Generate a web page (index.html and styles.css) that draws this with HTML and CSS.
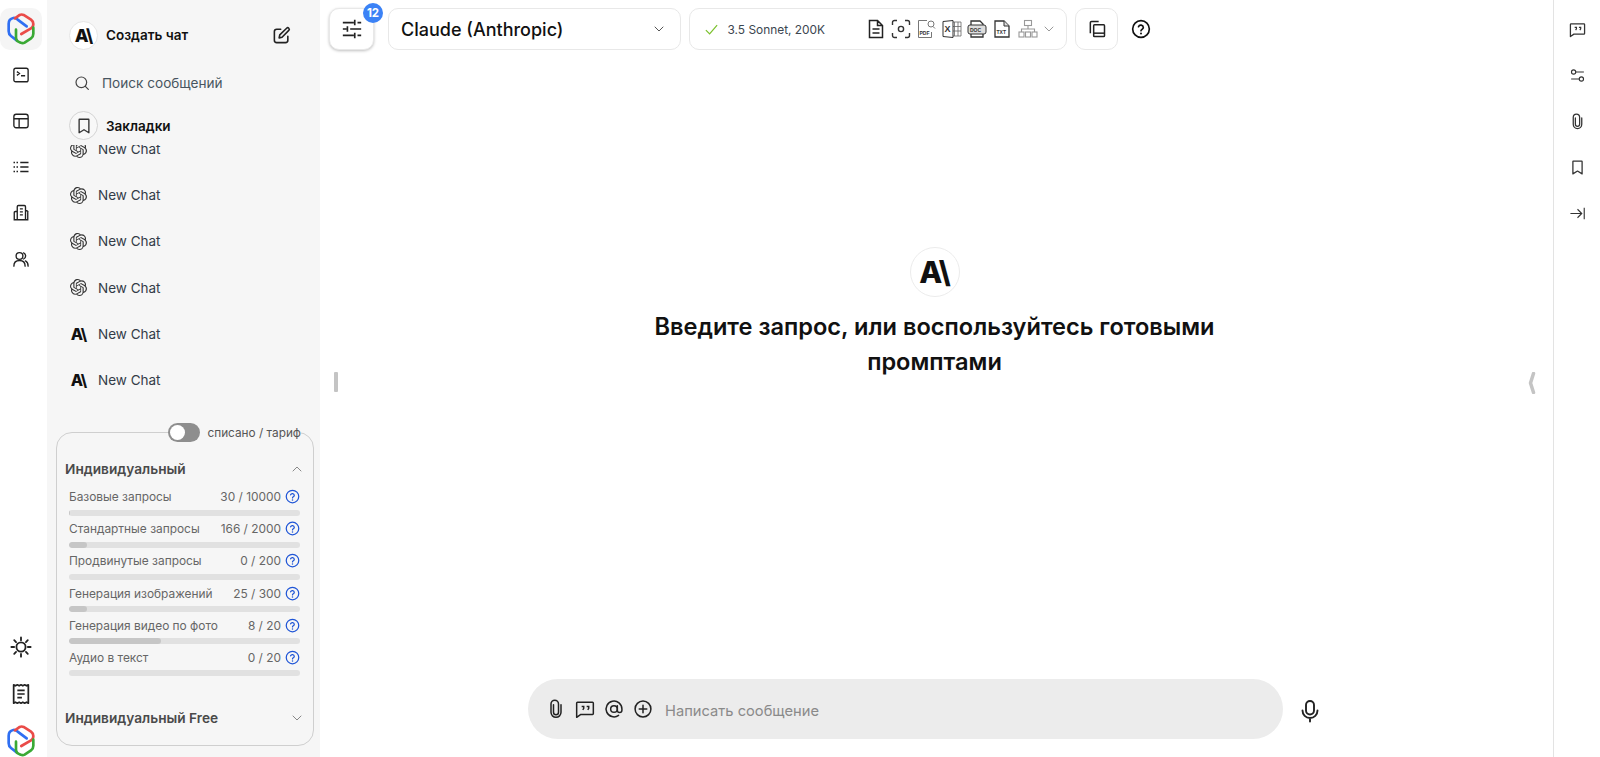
FILE: index.html
```html
<!DOCTYPE html>
<html lang="ru">
<head>
    <meta charset="UTF-8">
    <meta name="viewport" content="width=device-width, initial-scale=1.0">
    <title>Чат</title>
    <link rel="stylesheet" href="styles.css">
</head>
<body>

    <svg class="defs" width="0" height="0">
        <symbol id="logo" viewBox="20 42 82 96">
            <path d="M48 124 31 111Q24 106 24 97V74Q24 60 38 57 44 56 50 61L78 82" fill="none" stroke="#2f6ff2" stroke-width="8" stroke-linecap="round"/>
            <path d="M43 58 57 48Q63 45 69 48L91 62Q98 67 98 75 98 84 91 88L62 105" fill="none" stroke="#ea4b48" stroke-width="8" stroke-linecap="round"/>
            <path d="M46 92V116Q46 124 53 128L60 131Q66 134 72 131L91 118Q98 113 98 104V86" fill="none" stroke="#3aa935" stroke-width="8" stroke-linecap="round"/>
        </symbol>
        <symbol id="openai" viewBox="0 0 24 24">
            <path fill="#333" d="M22.2819 9.8211a5.9847 5.9847 0 0 0-.5157-4.9108 6.0462 6.0462 0 0 0-6.5098-2.9A6.0651 6.0651 0 0 0 4.9807 4.1818a5.9847 5.9847 0 0 0-3.9977 2.9 6.0462 6.0462 0 0 0 .7427 7.0966 5.98 5.98 0 0 0 .511 4.9107 6.051 6.051 0 0 0 6.5146 2.9001A5.9847 5.9847 0 0 0 13.2599 24a6.0557 6.0557 0 0 0 5.7718-4.2058 5.9894 5.9894 0 0 0 3.9977-2.9001 6.0557 6.0557 0 0 0-.7475-7.0729zm-9.022 12.6081a4.4755 4.4755 0 0 1-2.8764-1.0408l.1419-.0804 4.7783-2.7582a.7948.7948 0 0 0 .3927-.6813v-6.7369l2.02 1.1686a.071.071 0 0 1 .038.052v5.5826a4.504 4.504 0 0 1-4.4945 4.4944zm-9.6607-4.1254a4.4708 4.4708 0 0 1-.5346-3.0137l.142.0852 4.783 2.7582a.7712.7712 0 0 0 .7806 0l5.8428-3.3685v2.3324a.0804.0804 0 0 1-.0332.0615L9.74 19.9502a4.4992 4.4992 0 0 1-6.1408-1.6464zM2.3408 7.8956a4.485 4.485 0 0 1 2.3655-1.9728V11.6a.7664.7664 0 0 0 .3879.6765l5.8144 3.3543-2.0201 1.1685a.0757.0757 0 0 1-.071 0l-4.8303-2.7865A4.504 4.504 0 0 1 2.3408 7.872zm16.5963 3.8558L13.1038 8.364 15.1192 7.2a.0757.0757 0 0 1 .071 0l4.8303 2.7913a4.4944 4.4944 0 0 1-.6765 8.1042v-5.6772a.79.79 0 0 0-.407-.667zm2.0107-3.0231l-.142-.0852-4.7735-2.7818a.7759.7759 0 0 0-.7854 0L9.409 9.2297V6.8974a.0662.0662 0 0 1 .0284-.0615l4.8303-2.7866a4.4992 4.4992 0 0 1 6.6802 4.66zM8.3065 12.863l-2.02-1.1638a.0804.0804 0 0 1-.038-.0567V6.0742a4.4992 4.4992 0 0 1 7.3757-3.4537l-.142.0805L8.704 5.459a.7948.7948 0 0 0-.3927.6813zm1.0976-2.3654l2.602-1.4998 2.6069 1.4998v2.9994l-2.5974 1.4997-2.6067-1.4997Z"/>
        </symbol>
        <symbol id="help" viewBox="0 0 24 24">
            <circle cx="12" cy="12" r="10" fill="none" stroke="currentColor" stroke-width="2"/>
            <path d="M9 9.3a3 3 0 0 1 5.8.9c0 2-2.8 2.4-2.8 4" fill="none" stroke="currentColor" stroke-width="2" stroke-linecap="round"/>
            <circle cx="12" cy="17.5" r="1.2" fill="currentColor"/>
        </symbol>
        <symbol id="quote" viewBox="0 0 24 24">
            <path d="M3 4h18a1 1 0 0 1 1 1v12.500a1 1 0 0 1-1 1H7L2 22V5a1 1 0 0 1 1-1z" fill="none" stroke="currentColor" stroke-width="1.8" stroke-linejoin="round"/>
            <path d="M8 9h2.500v2.200L9.300 13M14 9h2.500v2.200L15.300 13" fill="none" stroke="currentColor" stroke-width="1.700"/>
        </symbol>
        <symbol id="clip" viewBox="0 0 24 24">
            <path d="M9 7v9a3 3 0 0 0 6 0V6a4.500 4.500 0 0 0-9 0v10a6 6 0 0 0 12 0V7" fill="none" stroke="currentColor" stroke-width="1.800" stroke-linecap="round"/>
        </symbol>
        <symbol id="bookmark" viewBox="0 0 24 24">
            <path d="M6 3h12a.5.5 0 0 1 .5.5V21L12 17l-6.500 4V3.500A.5.5 0 0 1 6 3z" fill="none" stroke="currentColor" stroke-width="1.800" stroke-linejoin="round"/>
        </symbol>
        <symbol id="chevron" viewBox="0 0 24 24">
            <path d="M4 8l8 8 8-8" fill="none" stroke="currentColor" stroke-width="2" stroke-linecap="round" stroke-linejoin="round"/>
        </symbol>
    </svg>

    <div class="app">

        <nav class="rail">
            <div class="rail-logo"><svg class="logo-icon"><use href="#logo"/></svg></div>
            <div class="rail-items">
                <svg class="rail-icon" viewBox="0 0 24 24"><rect x="2.500" y="3" width="19" height="18" rx="2.500" fill="none" stroke="#222" stroke-width="1.800"/><path d="M6.500 7.500l3.500 2.500-3.500 2.500M12 13h5.500" fill="none" stroke="#222" stroke-width="1.700"/></svg>
                <svg class="rail-icon" viewBox="0 0 24 24"><rect x="2.500" y="3" width="19" height="18" rx="3" fill="none" stroke="#222" stroke-width="1.800"/><path d="M2.500 9h19M9.500 9v12" fill="none" stroke="#222" stroke-width="1.800"/></svg>
                <svg class="rail-icon" viewBox="0 0 24 24"><path d="M2 6h2M6 6h2M11 6h11M2 12h2M6 12h2M11 12h11M2 18h2M6 18h2M11 18h11" fill="none" stroke="#222" stroke-width="2"/></svg>
                <svg class="rail-icon" viewBox="0 0 24 24"><path d="M7 21V3.500A1.500 1.500 0 0 1 8.500 2h8A1.500 1.500 0 0 1 18 3.500V21M7 10H4.500A1.500 1.500 0 0 0 3 11.500V21h18v-9.500A1.500 1.500 0 0 0 18 10M10.500 6.500h4M10.500 10.500h4M10.500 14.500h4" fill="none" stroke="#222" stroke-width="1.800"/></svg>
                <svg class="rail-icon" viewBox="0 0 24 24"><circle cx="10" cy="8" r="4.500" fill="none" stroke="#222" stroke-width="1.800"/><path d="M2.500 21.500c0-4.500 3-7.500 7.500-7.500s7.500 3 7.500 7.500M15.500 3.800a4.500 4.500 0 0 1 0 8.200M18 14.500c2 1 3.500 3.500 3.500 7" fill="none" stroke="#222" stroke-width="1.800" stroke-linecap="round"/></svg>
            </div>
            <div class="rail-bottom">
                <svg class="sun-icon" viewBox="0 0 24 24"><circle cx="12" cy="12" r="5" fill="none" stroke="#222" stroke-width="2"/><path d="M12 1.500v3M12 19.500v3M1.500 12h3M19.500 12h3M4.600 4.600l2 2M17.400 17.400l2 2M4.600 19.400l2-2M17.400 6.600l2-2" fill="none" stroke="#222" stroke-width="2" stroke-linecap="round"/></svg>
                <svg class="sun-icon" viewBox="0 0 24 24"><path d="M4 2l2 1 2-1 2 1 2-1 2 1 2-1 2 1 2-1v20l-2-1-2 1-2-1-2 1-2-1-2 1-2-1-2 1z" fill="none" stroke="#222" stroke-width="1.900" stroke-linejoin="round"/><path d="M8 8h8M8 12h8M8 16h5" fill="none" stroke="#222" stroke-width="1.900"/></svg>
                <svg class="logo-icon logo-bottom"><use href="#logo"/></svg>
            </div>
        </nav>

        <aside class="panel">
            <div class="panel-top">
                <div class="panel-row new-chat">
                    <span class="avatar a-mark">A\</span>
                    <b>Создать чат</b>
                    <svg class="edit-icon" viewBox="0 0 24 24"><path d="M11 4H6a3 3 0 0 0-3 3v11a3 3 0 0 0 3 3h11a3 3 0 0 0 3-3v-5" fill="none" stroke="#222" stroke-width="2" stroke-linecap="round"/><path d="M9 15l.8-3.800L18.500 2.800a1.800 1.800 0 0 1 2.700 2.700l-8.500 8.700z" fill="none" stroke="#222" stroke-width="2" stroke-linejoin="round"/></svg>
                </div>
                <div class="search-row">
                    <svg class="search-icon" viewBox="0 0 24 24"><circle cx="11" cy="11" r="8" fill="none" stroke="#444" stroke-width="1.800"/><path d="M17 17l4.500 4.500" stroke="#444" stroke-width="1.800" stroke-linecap="round"/></svg>
                    <span>Поиск сообщений</span>
                </div>
                <div class="panel-row bookmarks">
                    <span class="avatar"><svg class="small-icon"><use href="#bookmark"/></svg></span>
                    <b>Закладки</b>
                </div>
            </div>

            <div class="chat-list">
                <div class="chat-item"><svg class="chat-icon"><use href="#openai"/></svg>New Chat</div>
                <div class="chat-item"><svg class="chat-icon"><use href="#openai"/></svg>New Chat</div>
                <div class="chat-item"><svg class="chat-icon"><use href="#openai"/></svg>New Chat</div>
                <div class="chat-item"><svg class="chat-icon"><use href="#openai"/></svg>New Chat</div>
                <div class="chat-item"><span class="chat-icon a-mark">A\</span>New Chat</div>
                <div class="chat-item"><span class="chat-icon a-mark">A\</span>New Chat</div>
            </div>

            <section class="usage">
                <div class="usage-switch">
                    <span class="toggle"><i></i></span>
                    <span>списано / тариф</span>
                </div>
                <div class="plan-head">
                    <span>Индивидуальный</span>
                    <svg class="plan-chevron flip"><use href="#chevron"/></svg>
                </div>
                <div class="meter">
                    <div class="meter-line"><span>Базовые запросы</span><em>30 / 10000</em><svg class="help-icon"><use href="#help"/></svg></div>
                    <div class="bar"><div class="bar-fill" style="width: 0.3%"></div></div>
                </div>
                <div class="meter">
                    <div class="meter-line"><span>Стандартные запросы</span><em>166 / 2000</em><svg class="help-icon"><use href="#help"/></svg></div>
                    <div class="bar"><div class="bar-fill" style="width: 8%"></div></div>
                </div>
                <div class="meter">
                    <div class="meter-line"><span>Продвинутые запросы</span><em>0 / 200</em><svg class="help-icon"><use href="#help"/></svg></div>
                    <div class="bar"></div>
                </div>
                <div class="meter">
                    <div class="meter-line"><span>Генерация изображений</span><em>25 / 300</em><svg class="help-icon"><use href="#help"/></svg></div>
                    <div class="bar"><div class="bar-fill" style="width: 8%"></div></div>
                </div>
                <div class="meter">
                    <div class="meter-line"><span>Генерация видео по фото</span><em>8 / 20</em><svg class="help-icon"><use href="#help"/></svg></div>
                    <div class="bar"><div class="bar-fill" style="width: 40%"></div></div>
                </div>
                <div class="meter">
                    <div class="meter-line"><span>Аудио в текст</span><em>0 / 20</em><svg class="help-icon"><use href="#help"/></svg></div>
                    <div class="bar"></div>
                </div>
                <div class="plan-head plan-free">
                    <span>Индивидуальный Free</span>
                    <svg class="plan-chevron"><use href="#chevron"/></svg>
                </div>
            </section>
        </aside>

        <main class="main">
            <header class="topbar">
                <button class="filter-btn">
                    <svg class="filter-icon" viewBox="0 0 24 24"><path d="M2 5h12M18 5h4M15 2v6M2 12h4M10 12h12M7 9v6M2 19h12M18 19h4M15 16v6" fill="none" stroke="#222" stroke-width="1.800"/></svg>
                    <span class="badge">12</span>
                </button>
                <div class="select-box">
                    <span>Claude (Anthropic)</span>
                    <svg class="select-chevron"><use href="#chevron"/></svg>
                </div>
                <div class="model-box">
                    <svg class="check-icon" viewBox="0 0 24 24"><path d="M3 13l6 6L21 5" fill="none" stroke="#7cc22e" stroke-width="2"/></svg>
                    <span class="model-name">3.5 Sonnet, 200K</span>
                    <div class="caps">
                        <svg class="cap" viewBox="0 0 20 20"><path d="M3.500 1.500h8l5 5v12h-13zM11.500 1.500v5h5M6.500 10h7M6.500 14h7" fill="none" stroke="#222" stroke-width="1.500"/></svg>
                        <svg class="cap" viewBox="0 0 20 20"><path d="M1.500 6V3.500a2 2 0 0 1 2-2H6M14 1.500h2.500a2 2 0 0 1 2 2V6M18.500 14v2.500a2 2 0 0 1-2 2H14M6 18.500H3.500a2 2 0 0 1-2-2V14" fill="none" stroke="#333" stroke-width="1.400"/><circle cx="10" cy="10" r="2.600" fill="none" stroke="#333" stroke-width="1.400"/></svg>
                        <svg class="cap" viewBox="0 0 20 20"><path d="M11 1.500H2.500v17h13V13" fill="none" stroke="#777" stroke-width="1"/><circle cx="15" cy="5" r="3" fill="none" stroke="#777" stroke-width="1"/><path d="M17 7.500l2 2" stroke="#777"/><text x="3.500" y="15.500" class="cap-text">PDF</text></svg>
                        <svg class="cap" viewBox="0 0 20 20"><path d="M9 3h10v14H9M12.500 3v14M16 3v14M9 7.500h10M9 12h10" fill="none" stroke="#666" stroke-width=".8"/><path d="M1 2.500l10-1v17l-10-1z" fill="#fff" stroke="#333" stroke-width="1"/><text x="2.500" y="13" class="cap-text cap-x">X</text></svg>
                        <svg class="cap" viewBox="0 0 20 20"><path d="M4 6V2h9l3 3v1M4 15v3h12v-3" fill="none" stroke="#333" stroke-width="1.300"/><rect x="1" y="6" width="18" height="9" rx="2" fill="#ddd" stroke="#333" stroke-width="1"/><text x="3" y="13" class="cap-text">DOC</text></svg>
                        <svg class="cap" viewBox="0 0 20 20"><path d="M3 18V2h9l5 5v11z" fill="none" stroke="#333" stroke-width="1.300"/><path d="M12 2v5h5" fill="#ddd" stroke="#333"/><text x="4.500" y="15" class="cap-text">TXT</text></svg>
                        <svg class="cap" viewBox="0 0 20 20"><path d="M10 6.500V10M3.500 13v-3h13v3" fill="none" stroke="#999" stroke-width="1.100"/><rect x="6.500" y="1.500" width="7" height="5" fill="none" stroke="#999" stroke-width="1.100"/><rect x="1" y="13" width="5" height="5" fill="none" stroke="#999" stroke-width="1.100"/><rect x="14" y="13" width="5" height="5" fill="none" stroke="#999" stroke-width="1.100"/><rect x="7.500" y="13" width="5" height="5" fill="none" stroke="#999" stroke-width="1.100"/></svg>
                    </div>
                    <svg class="model-chevron"><use href="#chevron"/></svg>
                </div>
                <button class="copy-btn">
                    <svg class="copy-icon" viewBox="0 0 24 24"><path d="M14 3H5.500A1.500 1.500 0 0 0 4 4.500V17" fill="none" stroke="#222" stroke-width="1.800"/><rect x="8" y="7" width="13" height="14" rx="1" fill="none" stroke="#222" stroke-width="1.800"/><path d="M8 17h13" stroke="#222" stroke-width="1.800"/></svg>
                </button>
                <svg class="top-help"><use href="#help"/></svg>
            </header>

            <section class="welcome">
                <span class="welcome-logo a-mark">A\</span>
                <h1>Введите запрос, или воспользуйтесь готовыми промптами</h1>
            </section>

            <div class="composer-row">
                <div class="composer">
                    <svg class="composer-icon"><use href="#clip"/></svg>
                    <svg class="composer-icon"><use href="#quote"/></svg>
                    <svg class="composer-icon" viewBox="0 0 24 24"><circle cx="12" cy="12" r="4" fill="none" stroke="currentColor" stroke-width="1.800"/><path d="M16 8v5.500a2.700 2.700 0 0 0 5.500 0V12a9.500 9.500 0 1 0-4 7.700" fill="none" stroke="currentColor" stroke-width="1.800" stroke-linecap="round"/></svg>
                    <svg class="composer-icon" viewBox="0 0 24 24"><circle cx="12" cy="12" r="9.500" fill="none" stroke="currentColor" stroke-width="1.800"/><path d="M12 7.500v9M7.500 12h9" stroke="currentColor" stroke-width="1.800" stroke-linecap="round"/></svg>
                    <span class="composer-text">Написать сообщение</span>
                </div>
                <svg class="mic-icon" viewBox="0 0 24 24"><rect x="8" y="2" width="8" height="13.500" rx="4" fill="none" stroke="#222" stroke-width="1.900"/><path d="M4.500 11.500a7.500 7.500 0 0 0 15 0M12 19v3.500" fill="none" stroke="#222" stroke-width="1.900" stroke-linecap="round"/></svg>
            </div>

            <span class="handle-left"></span>
            <svg class="handle-right" viewBox="0 0 8 22"><path d="M5.500 1.500L2.500 11l3 9.500" fill="none" stroke="#c4c4c4" stroke-width="3.500" stroke-linecap="round" stroke-linejoin="round"/></svg>
        </main>

        <aside class="right-rail">
            <svg class="right-icon"><use href="#quote"/></svg>
            <svg class="right-icon" viewBox="0 0 24 24"><circle cx="6.500" cy="7" r="3" fill="none" stroke="currentColor" stroke-width="1.600"/><circle cx="17.500" cy="17" r="3" fill="none" stroke="currentColor" stroke-width="1.600"/><path d="M9.500 7H21M3 17h11.500" stroke="currentColor" stroke-width="1.600"/></svg>
            <svg class="right-icon"><use href="#clip"/></svg>
            <svg class="right-icon"><use href="#bookmark"/></svg>
            <svg class="right-icon" viewBox="0 0 24 24"><path d="M2 12h16M12 6l6 6-6 6M21.500 4v16" fill="none" stroke="currentColor" stroke-width="1.600"/></svg>
        </aside>

    </div>

</body>
</html>
```

FILE: styles.css
```css
* { box-sizing: border-box; }
html, body { height: 100%; }
body { margin: 0; font-family: Inter, "Noto Sans", sans-serif; color: #111; background-color: #fff; overflow: hidden; }
.defs { position: absolute; }
.app { display: flex; height: 757px; }

.a-mark { font-weight: 800; letter-spacing: -1px; color: #111; }

/* left icon rail */
.rail { width: 47px; flex-shrink: 0; display: flex; flex-direction: column; align-items: flex-start; padding-top: 8px; }
.rail-logo { width: 42px; height: 42px; border-radius: 10px; background-color: #f5f5f5; display: flex; align-items: center; justify-content: center; }
.logo-icon { width: 28px; height: 32px; }
.rail-items { display: flex; flex-direction: column; gap: 28px; margin: 16px 0 0 12px; }
.rail-icon { width: 18px; height: 18px; display: block; }
.rail-bottom { margin-top: auto; width: 42px; display: flex; flex-direction: column; align-items: center; gap: 25px; }
.logo-bottom { margin-top: -5px; }
.sun-icon { width: 22px; height: 22px; }

/* chats panel */
.panel { width: 273px; flex-shrink: 0; background-color: #f6f6f6; display: flex; flex-direction: column; }
.panel-top { height: 145px; padding: 20px 29px 0 22px; flex-shrink: 0; }
.panel-row { display: flex; align-items: center; gap: 8px; font-size: 13.5px; }
.panel-row b { font-weight: 600; }
.avatar { width: 29px; height: 29px; border-radius: 50%; background-color: #fff; border: 1px solid #e6e6e6; display: flex; align-items: center; justify-content: center; font-size: 18px; flex-shrink: 0; }
.new-chat { height: 30px; }
.bookmarks .avatar { border-color: #d4d4d4; background-color: #f8f8f8; }
.edit-icon { width: 19px; height: 19px; margin-left: auto; }
.search-row { display: flex; align-items: center; gap: 12px; margin: 23px 0 0 5px; font-size: 13.6px; color: #475560; height: 20px; }
.search-icon { width: 16px; height: 16px; }
.bookmarks { margin-top: 18px; }
.small-icon { width: 18px; height: 18px; color: #333; display: block; }

.chat-list { flex: 1; overflow: hidden; padding-left: 23px; min-height: 0; }
.chat-item { height: 46.2px; display: flex; align-items: center; gap: 11px; font-size: 13.5px; color: #333c48; }
.chat-item:first-child { margin-top: -19px; }
.chat-icon { width: 17px; height: 17px; flex-shrink: 0; font-size: 16px; display: flex; align-items: center; justify-content: center; }

/* usage box */
.usage { position: relative; margin: 0 6px 11px 9px; height: 314px; flex-shrink: 0; border: 1px solid #cfcfcf; border-radius: 16px; padding: 0 13px 0 8px; }
.usage-switch { position: absolute; top: -10px; right: 12px; display: flex; align-items: center; gap: 7px; background-color: #f6f6f6; font-size: 11.8px; color: #555; }
.toggle { width: 32px; height: 19px; border-radius: 10px; background-color: #8e8e8e; padding: 2px; display: block; }
.toggle i { display: block; width: 15px; height: 15px; border-radius: 50%; background-color: #fff; }
.plan-head { display: flex; justify-content: space-between; align-items: center; font-size: 13.7px; font-weight: 600; color: #4a4a4a; height: 20px; margin-top: 26px; margin-bottom: 9px; }
.plan-free { margin-top: 26.8px; margin-bottom: 0; }
.plan-chevron { width: 12px; height: 12px; color: #888; margin-right: -3px; }
.flip { transform: rotate(180deg); }
.meter { margin-left: 4px; height: 32.2px; }
.meter-line { display: flex; align-items: center; font-size: 11.9px; color: #666; height: 17px; }
.meter-line span { flex: 1; }
.meter-line em { font-style: normal; }
.help-icon { width: 15px; height: 15px; color: #1f55d6; margin-left: 4px; }
.bar { height: 6px; margin-top: 4.5px; border-radius: 3px; background-color: #e1e1e1; overflow: hidden; }
.bar-fill { height: 100%; border-radius: 3px; background-color: #c6c6c6; }

/* main area */
.main { flex: 1; position: relative; display: flex; flex-direction: column; min-width: 0; }
.topbar { height: 58px; padding: 8px 0 0 9px; display: flex; align-items: flex-start; flex-shrink: 0; }
button { background-color: #fff; border: 1px solid #e8e8e8; cursor: pointer; padding: 0; font-family: inherit; }
.filter-btn { position: relative; width: 45px; height: 42px; border-radius: 10px; box-shadow: 0 1px 3px rgba(0, 0, 0, 0.25); display: flex; align-items: center; justify-content: center; margin-right: 14px; }
.filter-icon { width: 22px; height: 22px; }
.badge { position: absolute; top: -6px; right: -10px; width: 20px; height: 20px; border-radius: 50%; background-color: #3b82f6; color: #fff; font-size: 11.5px; font-weight: 700; display: flex; align-items: center; justify-content: center; }
.select-box { width: 293px; height: 42px; border: 1px solid #e8e8e8; border-radius: 10px; display: flex; align-items: center; justify-content: space-between; padding: 0 15px 0 12px; font-size: 18px; font-weight: 500; margin-right: 8px; }
.select-chevron { width: 12px; height: 12px; color: #555; }
.model-box { width: 378px; height: 42px; border: 1px solid #e8e8e8; border-radius: 10px; display: flex; align-items: center; padding-left: 14px; margin-right: 8px; }
.check-icon { width: 15px; height: 15px; margin-right: 8.5px; }
.model-name { font-size: 11.9px; color: #3c4650; width: 127px; white-space: nowrap; flex-shrink: 0; margin-right: 11px; }
.caps { display: flex; align-items: center; gap: 5.4px; }
.cap { width: 20px; height: 20px; }
.cap-text { font-family: "Liberation Sans", sans-serif; font-size: 5px; font-weight: 700; fill: #333; }
.cap-x { font-size: 9px; }
.model-chevron { width: 12px; height: 12px; color: #999; margin-left: 5.5px; }
.copy-btn { width: 43px; height: 42px; border-radius: 10px; display: flex; align-items: center; justify-content: center; margin-right: 13px; }
.copy-icon { width: 20px; height: 20px; }
.top-help { width: 20px; height: 20px; margin-top: 11px; color: #111; }

.welcome { flex: 1; display: flex; flex-direction: column; align-items: center; padding: 189px 4px 0 0; min-height: 0; }
.welcome-logo { width: 50px; height: 50px; border-radius: 50%; border: 1px solid #ececec; display: flex; align-items: center; justify-content: center; font-size: 30px; }
.welcome h1 { width: 590px; margin: 13px 0 0; text-align: center; font-size: 23.6px; line-height: 34.5px; font-weight: 600; }

.composer-row { display: flex; align-items: center; margin: 0 0 18px 208px; flex-shrink: 0; }
.composer { width: 755px; height: 60px; border-radius: 30px; background-color: #ececec; display: flex; align-items: center; padding-left: 18px; gap: 9px; color: #222; }
.composer-icon { width: 20px; height: 20px; }
.composer-text { font-size: 14.7px; color: #8a8a8a; margin: 3px 0 0 3px; }
.mic-icon { width: 24px; height: 24px; margin: 3px 0 0 15px; }

.handle-left { position: absolute; left: 14px; top: 372px; width: 4px; height: 20px; border-radius: 1px; background-color: #c4c4c4; }
.handle-right { position: absolute; right: 17px; top: 372px; width: 8px; height: 22px; }

/* right rail */
.right-rail { width: 47px; flex-shrink: 0; border-left: 1px solid #e3e3e3; display: flex; flex-direction: column; align-items: center; padding-top: 20.5px; gap: 29.2px; color: #333; }
.right-icon { width: 17px; height: 17px; }
```
